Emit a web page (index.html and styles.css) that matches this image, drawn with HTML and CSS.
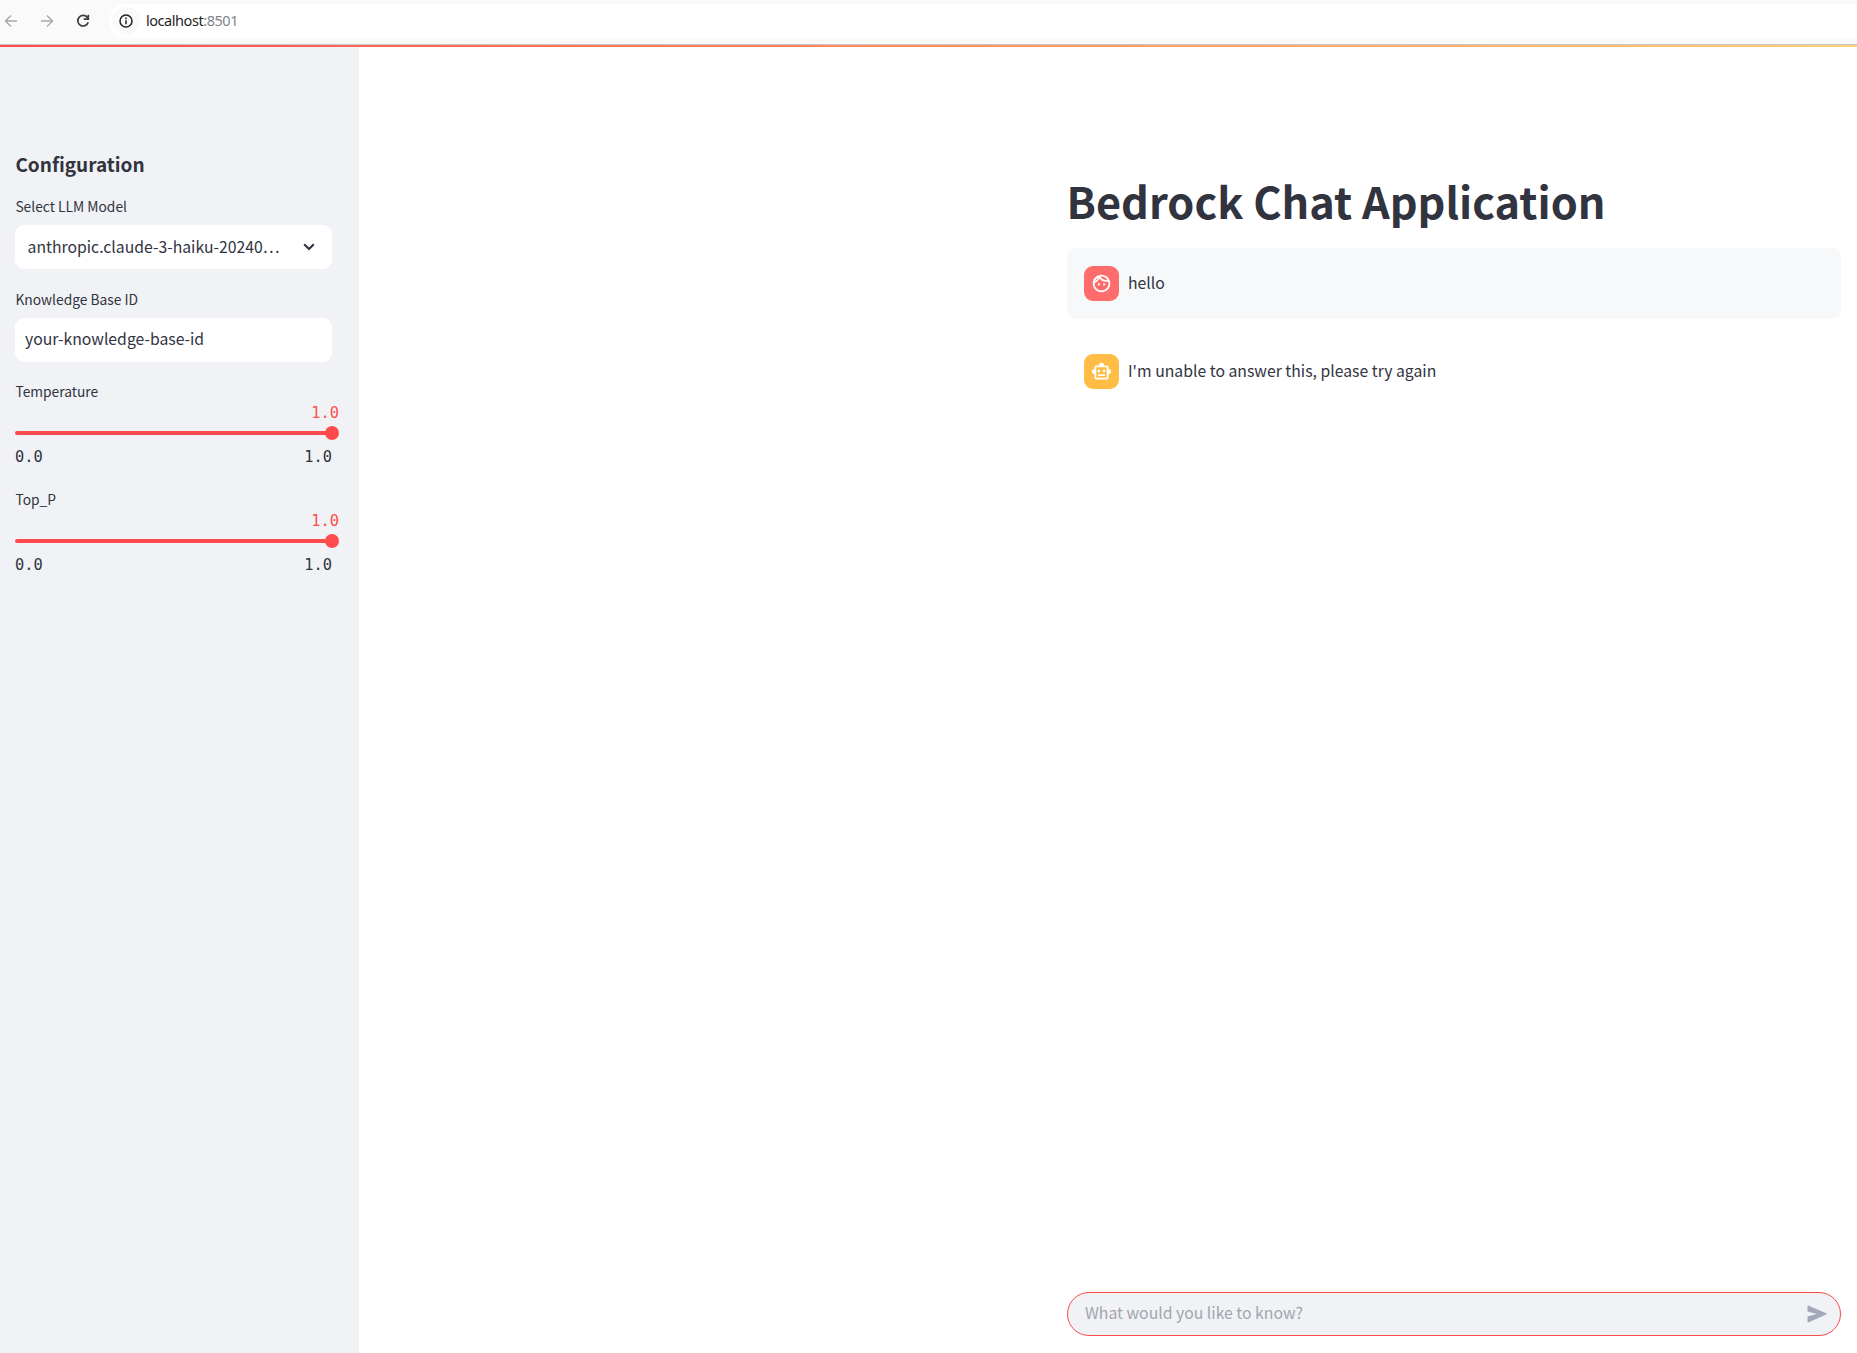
FILE: index.html
```
<!DOCTYPE html>
<html lang="en">
<head>
<meta charset="utf-8">
<title>Bedrock Chat Application</title>
<link rel="stylesheet" href="styles.css">
</head>
<body>
<header class="browser-bar">
  <svg class="nav-icon nav-muted" viewBox="0 0 14 14"><path d="M13 7H2M7 1.5 1.5 7 7 12.500"/></svg>
  <svg class="nav-icon nav-muted" viewBox="0 0 14 14"><path d="M1 7h11M7 1.500 12.500 7 7 12.500"/></svg>
  <svg class="nav-icon reload" viewBox="0 0 14 14"><path d="M11.800 4.200A5.300 5.300 0 1 0 12.200 8.200M12.300.8v4.400H7.800"/></svg>
  <div class="address">
    <span class="site-info"><svg viewBox="0 0 14 14"><circle cx="7" cy="7" r="6"/><path d="M7 6.200v4M7 3.600v1.600"/></svg></span>
    <span class="url"><span class="host">localhost</span>:8501</span>
  </div>
</header>
<div class="decoration"></div>
<div class="app">
  <aside class="sidebar">
    <h2>Configuration</h2>
    <div class="field">
      <div class="label">Select LLM Model</div>
      <div class="box select"><span>anthropic.claude-3-haiku-20240…</span>
        <svg class="chevron" viewBox="0 0 12 8"><path d="M1.200 1.300 6 6.100l4.800-4.800"/></svg>
      </div>
    </div>
    <div class="field">
      <div class="label">Knowledge Base ID</div>
      <div class="box"><span>your-knowledge-base-id</span></div>
    </div>
    <div class="field slider">
      <div class="label">Temperature</div>
      <div class="value">1.0</div>
      <div class="track"><span class="thumb"></span></div>
      <div class="ticks"><span>0.0</span><span>1.0</span></div>
    </div>
    <div class="field slider">
      <div class="label">Top_P</div>
      <div class="value">1.0</div>
      <div class="track"><span class="thumb"></span></div>
      <div class="ticks"><span>0.0</span><span>1.0</span></div>
    </div>
  </aside>
  <main class="main">
    <h1>Bedrock Chat Application</h1>
    <div class="message user">
      <span class="avatar"><svg viewBox="0 0 24 24"><path d="M10.250 13a1.250 1.250 0 1 1-2.500 0 1.250 1.250 0 0 1 2.500 0zM15 11.750a1.250 1.250 0 1 0 0 2.500 1.250 1.250 0 0 0 0-2.500zm7 .25c0 5.520-4.480 10-10 10S2 17.520 2 12 6.480 2 12 2s10 4.480 10 10zM10.660 4.120C12.060 6.440 14.600 8 17.500 8c.46 0 .91-.05 1.340-.12C17.440 5.560 14.900 4 12 4c-.46 0-.91.050-1.340.12zM4.420 9.470a8.046 8.046 0 0 0 3.660-4.440 8.046 8.046 0 0 0-3.660 4.440zM20 12c0-.78-.12-1.530-.33-2.240-.7.150-1.420.24-2.170.24a10 10 0 0 1-7.760-3.690A10.016 10.016 0 0 1 4 11.860c.01.040 0 .09 0 .14 0 4.410 3.590 8 8 8s8-3.590 8-8z"/></svg></span>
      <p>hello</p>
    </div>
    <div class="message bot">
      <span class="avatar"><svg viewBox="0 0 24 24"><path d="M20 9V7c0-1.100-.9-2-2-2h-3c0-1.660-1.340-3-3-3S9 3.340 9 5H6c-1.100 0-2 .9-2 2v2c-1.660 0-3 1.340-3 3s1.340 3 3 3v4c0 1.100.9 2 2 2h12c1.100 0 2-.9 2-2v-4c1.660 0 3-1.340 3-3s-1.340-3-3-3zm-2 10H6V7h12v12zm-9-6c-.83 0-1.500-.67-1.500-1.500S8.170 10 9 10s1.500.67 1.500 1.500S9.830 13 9 13zm7.500-1.500c0 .83-.67 1.500-1.500 1.500s-1.500-.67-1.500-1.500.67-1.500 1.500-1.500 1.500.67 1.500 1.500zM8 15h8v2H8v-2z"/></svg></span>
      <p>I'm unable to answer this, please try again</p>
    </div>
    <div class="chat-input">
      <span class="placeholder">What would you like to know?</span>
      <svg class="send" viewBox="0 0 20 18"><path d="M.5 1.600C.5.800 1 .4 1.700.7l17.500 7.600c.7.300.7 1 0 1.300L1.700 17.300C1 17.600.5 17.200.5 16.400v-4.900L9.800 9 .5 6.500z"/></svg>
    </div>
  </main>
</div>
</body>
</html>
```
FILE: styles.css
```
* { box-sizing: border-box; }
body {
  margin: 0;
  height: 1353px;
  display: flex;
  flex-direction: column;
  overflow: hidden;
  background: #fff;
  color: #31333f;
  font-family: "Noto Sans CJK SC", "Noto Sans", sans-serif;
  font-size: 15.780px;
}
h1, h2, p { margin: 0; }
svg { display: block; flex: none; }

.browser-bar {
  height: 45px;
  flex: none;
  display: flex;
  align-items: center;
  padding: 0 0 3px 4px;
  background: #fafafa;
  border-bottom: 1px solid #c8c8cb;
}
.nav-icon {
  width: 14px;
  height: 14px;
  margin-right: 22px;
  fill: none;
  stroke: #3c3c3c;
  stroke-width: 1.700;
}
.nav-muted { stroke: #a8a8a8; stroke-width: 1.400; }
.reload { margin-right: 19px; }
.address {
  flex: 1;
  height: 34px;
  display: flex;
  align-items: center;
  padding-left: 3px;
  background: #fff;
  border-radius: 17px 0 0 17px;
}
.site-info {
  width: 28px;
  height: 28px;
  display: flex;
  align-items: center;
  justify-content: center;
  border-radius: 50%;
  background: #fafafa;
}
.site-info svg { width: 14px; height: 14px; fill: none; stroke: #222; stroke-width: 1.500; }
.url { margin-left: 6px; padding-bottom: 1px; font: 14.500px/20px "Noto Sans", sans-serif; letter-spacing: -.45px; color: #80848a; }
.host { color: #1f1f1f; }
.decoration { height: 2px; flex: none; background: linear-gradient(90deg, #ff4b4b, #fffd80); background-size: 2500px 2px; }

.app { flex: 1; display: flex; min-height: 0; }
.sidebar { width: 359px; flex: none; padding: 104px 27px 0 15px; background: #f0f2f6; }
h2 { font-size: 19px; line-height: 26px; font-weight: 700; margin: 0 0 17px .4px; }
.field { margin-bottom: 18px; }
.label { font-size: 13.800px; line-height: 24px; margin: 0 0 7px .4px; }
.field:nth-of-type(2) { margin-bottom: 17px; }
.box {
  height: 44px;
  display: flex;
  align-items: center;
  padding: 0 16px 3px 10px;
  background: #fff;
  border-radius: 9px;
}
.select { padding: 0 17px 2px 12.500px; justify-content: space-between; }
.chevron { width: 12px; height: 8px; margin-top: 2px; fill: none; stroke: #31333f; stroke-width: 2.100; }
.slider .label { margin-bottom: 0; }
.value, .ticks { font-family: "DejaVu Sans Mono", monospace; font-size: 15.350px; }
.value { line-height: 20px; text-align: right; color: #ff4b4b; margin-right: -7px; }
.track { height: 14px; margin: 3px -7px 5px 0; display: flex; align-items: center; }
.track::before { content: ""; flex: 1; height: 4px; border-radius: 2px; background: #ff4b4b; }
.thumb { width: 14px; height: 14px; border-radius: 50%; background: #ff4b4b; margin-left: -2px; }
.ticks { display: flex; justify-content: space-between; line-height: 24px; }

.main { flex: 1; display: flex; flex-direction: column; padding: 121px 16px 17px 708px; }
h1 { height: 64px; line-height: 64px; font-size: 43.270px; font-weight: 700; white-space: nowrap; margin: 0 0 16px -.5px; }
.message {
  height: 71px;
  display: flex;
  align-items: center;
  gap: 9px;
  padding: 0 17px;
  margin-bottom: 17px;
  border-radius: 9px;
}
.message.user { background: #f7f8fa; }
.avatar {
  width: 35px;
  height: 35px;
  display: flex;
  align-items: center;
  justify-content: center;
  border-radius: 9px;
  background: #ff6c6c;
}
.bot .avatar { background: #ffbd45; }
.avatar svg { width: 21px; height: 21px; fill: #fff; }
.message p { line-height: 26px; padding-bottom: 2px; }
.chat-input {
  height: 44px;
  margin-top: auto;
  display: flex;
  align-items: center;
  justify-content: space-between;
  padding: 0 13px 0 17px;
  background: #f0f2f6;
  border: 1px solid #ff4b4b;
  border-radius: 22px;
}
.placeholder { padding-bottom: 4px; color: #a3a5ad; }
.send { width: 20px; height: 18px; fill: #a3a8b8; }
```
